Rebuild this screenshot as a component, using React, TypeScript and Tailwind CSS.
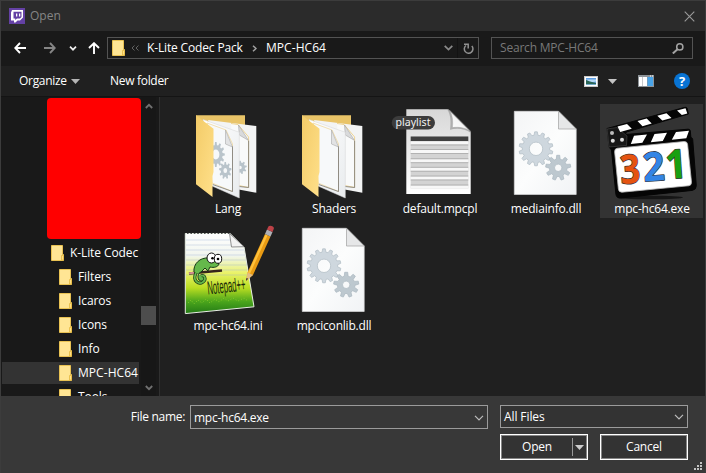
import React from "react";

const gearPath = (cx: number, cy: number, outer: number, root: number, hole: number, teeth: number) => {
  const pts: string[] = [];
  const step = (Math.PI * 2) / teeth;
  const at = (r: number, a: number) => `${(cx + r * Math.cos(a)).toFixed(2)} ${(cy + r * Math.sin(a)).toFixed(2)}`;
  for (let i = 0; i < teeth; i++) {
    const a = i * step - Math.PI / 2;
    pts.push(at(root, a - step * 0.32), at(outer, a - step * 0.17), at(outer, a + step * 0.17), at(root, a + step * 0.32));
  }
  return `M${pts.join("L")}Z M${cx + hole} ${cy}a${hole} ${hole} 0 1 0 ${-2 * hole} 0a${hole} ${hole} 0 1 0 ${2 * hole} 0Z`;
};

const SmallFolder = () => (
  <svg className="h-4 w-[13px] shrink-0" viewBox="0 0 13 16">
    <path d="M.5.5h11v9h1v6H.5z" fill="#ffe594" stroke="#e9c253" />
    <path d="M10.5 15V10.5h2V15z" fill="#ffe089" stroke="#e4b93f" strokeWidth=".8" />
  </svg>
);

const Chevron = ({ className = "" }: { className?: string }) => (
  <svg className={`h-[6px] w-[10px] shrink-0 ${className}`} viewBox="0 0 10 6">
    <path d="M1 .8l4 4 4-4" fill="none" stroke="currentColor" strokeWidth="1.2" />
  </svg>
);

const FolderIcon = ({ gears }: { gears?: boolean }) => (
  <svg className="h-24 w-[103px]" viewBox="0 0 103 96">
    <defs>
      <linearGradient id="flap" x1="0" y1="0" x2="1" y2="1">
        <stop offset="0" stopColor="#f3cb68" />
        <stop offset="1" stopColor="#ffe08a" />
      </linearGradient>
      <linearGradient id="leaf" x1="0" y1="0" x2="1" y2="1">
        <stop offset="0" stopColor="#ffffff" />
        <stop offset="1" stopColor="#e9ecee" />
      </linearGradient>
    </defs>
    <path d="M20 11.3H69V80H20z" fill="#e9c468" />
    <path d="M32 16L80.3 22V88.8L60 85z" fill="#f3f4f4" />
    <path d="M55 19.5l7 1L72.6 33V83.5L60 81" fill="#f9fafa" stroke="#eed493" strokeWidth="1" />
    <path d="M72.6 37V83.5L62 82.4" fill="none" stroke="#777" strokeWidth=".8" />
    <path d="M62.5 21l.8 10 9.3 5.5z" fill="#d9dadb" stroke="#999" strokeWidth=".5" />
    {gears && <path d={gearPath(64, 63.5, 6.8, 5, 1.8, 9)} fill="#b9c4cb" fillRule="evenodd" />}
    <path d="M27 15.5L63.3 28.3V94L36 82z" fill="url(#leaf)" stroke="#d5d5d5" strokeWidth=".5" />
    <path d="M31 19l19 7 6.5 14V87.5L36 79z" fill="#f7f9fa" stroke="#eed493" strokeWidth=".7" />
    <path d="M56.5 42V87.5L36.7 80.5" fill="none" stroke="#777" strokeWidth=".8" />
    <path d="M49.5 26v14l7 3z" fill="#e2e3e4" stroke="#aaa" strokeWidth=".6" />
    {gears && (
      <g fill="#b9c4cb" fillRule="evenodd">
        <path transform="translate(11 0) scale(.72 1)" d={gearPath(40, 50.5, 12.5, 9.5, 5, 12)} />
        <path transform="translate(14 0) scale(.72 1)" d={gearPath(49, 66.5, 8.6, 6.2, 2.6, 9)} />
      </g>
    )}
    <path d="M20 11.3l17.5 13.4V68l-1 4V93L20 80.2z" fill="url(#flap)" />
  </svg>
);

const DllIcon = () => (
  <svg className="h-24 w-[103px]" viewBox="0 0 103 96">
    <defs>
      <linearGradient id="sheet" x1="0" y1="0" x2="1" y2="1">
        <stop offset="0" stopColor="#f4f5f6" />
        <stop offset=".5" stopColor="#fcfdfd" />
        <stop offset="1" stopColor="#f1f3f5" />
      </linearGradient>
    </defs>
    <path d="M20.3 7.3H64.5L82.2 25V90.5H20.3z" fill="url(#sheet)" stroke="#d8d9da" strokeWidth=".7" />
    <path d="M64.5 7.3V25H82.2z" fill="#e6e7e8" stroke="#aaa" strokeWidth=".8" />
    <path d={gearPath(42, 44.8, 17, 13.7, 6.7, 14)} fill="#ced7de" stroke="#b5c0c8" strokeWidth=".8" fillRule="evenodd" />
    <path d={gearPath(64.2, 63.8, 12.6, 8.8, 3.7, 9)} fill="#bdc8cf" stroke="#a9b6be" strokeWidth=".7" fillRule="evenodd" />
  </svg>
);

const PlaylistIcon = () => (
  <svg className="h-24 w-[103px]" viewBox="0 0 103 96">
    <defs>
      <linearGradient id="paper" x1="0" y1="0" x2="0" y2="1">
        <stop offset="0" stopColor="#d7d7d7" />
        <stop offset="1" stopColor="#ffffff" />
      </linearGradient>
      <linearGradient id="curl" x1="0" y1="1" x2="1" y2="0">
        <stop offset="0" stopColor="#ffffff" />
        <stop offset=".5" stopColor="#f4f4f4" />
        <stop offset="1" stopColor="#aaa" />
      </linearGradient>
    </defs>
    <path d="M18.3 5.3H60L82.7 28V90H18.3z" fill="url(#paper)" />
    <path d="M59 5.3c4 5 4 14 3 20.5 7-2 15-1 20.7 3v-2L62 6z" fill="#8d8d8d" opacity=".6" />
    <path d="M60 5.3c5 4 5 13 4.4 18.3C71 22.6 79 24 82.7 28z" fill="url(#curl)" stroke="#999" strokeWidth=".4" />
    <path d="M22.7 32.5H80.3V84.5H22.7z" fill="#d3d3d3" />
    <path d="M22.7 32.5H80.3v4.8H22.7z" fill="#404040" />
    <path d="M22.7 37.3h57.6v3H22.7zM22.7 46h57.6v3H22.7zM22.7 55.2h57.6v3H22.7zM22.7 63.8h57.6v3H22.7zM22.7 72.5h57.6v3H22.7zM22.7 81.5h57.6v3H22.7z" fill="#f7f7f7" />
    <path d="M22.7 41h57.6M22.7 45.5h57.6M22.7 49.5h57.6M22.7 54.7h57.6M22.7 58.7h57.6M22.7 63.3h57.6M22.7 67.3h57.6M22.7 72h57.6M22.7 76h57.6M22.7 81h57.6" stroke="#aaa" strokeWidth=".8" />
    <rect x="3.7" y="12" width="43.3" height="13.4" rx="6.7" fill="#3c3c3c" />
    <text x="7.5" y="22" textLength="35" lengthAdjust="spacingAndGlyphs" fill="#f2f2f2" className="font-['Noto_Sans',sans-serif] text-[10.5px]">playlist</text>
  </svg>
);

const ClapperIcon = () => (
  <svg className="h-24 w-[103px]" viewBox="0 0 103 96">
    <ellipse cx="50" cy="93.5" rx="33" ry="1.8" fill="#151515" />
    <path d="M7 24.5L85 3.3q1.8-.4 2.2 1.2l1.2 5.5-62 18-1 2.5L88 25.2q2-.2 2.3 1.5l.6 6.8q1.5.2 1.8 2l3.6 46q0 4.3-4 4.9L20.5 94q-4 .2-4.6-3.8L11.5 46 9 43z" fill="#050505" stroke="#050505" strokeLinejoin="round" />
    <path d="M7 25l10-1.5 10 8.5-.5 9.5L9 43z" fill="#171717" stroke="#555" strokeWidth=".5" />
    <path d="M17.5 22.5l9.5-2.6 4.8 4.8-11.6 3.2zM37.5 17.1l9.2-2.5 5 5-9.2 2.6zM57.3 11.7l9.2-2.5 5 4.8-9.2 2.6zM77 6.4l8.5-2.2 1.8 5.2-5.5 1.7z" fill="#fff" />
    <path d="M34 31.8l13-1.2-4.6 8.2-11.6 1.2zM54.5 30l12.5-1.2-4.2 8.2-12 1.2zM76 28.1l13-1.3-2.7 7.5-14.5 1.5z" fill="#fff" />
    <circle cx="12" cy="29" r="2" fill="#bbb" />
    <circle cx="12.8" cy="36.8" r="2" fill="#ddd" />
    <circle cx="22" cy="35.8" r="2" fill="#ddd" />
    <path d="M17.5 44.2L84 37.5q3.3-.2 3.6 3L91.5 78q.2 3.4-3 3.8L22 88.2q-3.2.1-3.6-3L14.6 47.8q-.1-3.2 2.9-3.6z" fill="#fff" stroke="#bbb" strokeWidth=".8" />
    <g className="font-['Noto_Sans',sans-serif] text-[40px] font-bold" stroke="#333" strokeWidth="1.4" paintOrder="stroke" strokeLinejoin="round">
      <text transform="translate(21 80) rotate(-4)" textLength="20" lengthAdjust="spacingAndGlyphs" fill="#e55310">3</text>
      <text transform="translate(44 77.5) rotate(-4)" textLength="21.5" lengthAdjust="spacingAndGlyphs" fill="#3385e5">2</text>
      <text transform="translate(66.5 75) rotate(-4)" textLength="21" lengthAdjust="spacingAndGlyphs" fill="#19a010">1</text>
    </g>
  </svg>
);

const NotepadIcon = () => (
  <svg className="h-24 w-[103px]" viewBox="4 0 103 96">
    <defs>
      <linearGradient id="pad" x1="0" y1="0" x2="0" y2="1">
        <stop offset="0" stopColor="#ffffff" />
        <stop offset=".28" stopColor="#f1f5ee" />
        <stop offset=".5" stopColor="#e9f264" />
        <stop offset=".68" stopColor="#b9dd22" />
        <stop offset=".85" stopColor="#4aa51c" />
        <stop offset="1" stopColor="#237a16" />
      </linearGradient>
    </defs>
    <path d="M13.3 12.5H58L72 26l10 59.8L13.3 92.6z" fill="url(#pad)" stroke="#e8eee4" strokeWidth="1" />
    <path d="M15 11.8h43" stroke="#222" strokeWidth="2" strokeDasharray="1.6 1.8" />
    <path d="M14 19h45M14 24h49M14 29h58M14 34h59M14 39h60M14 44h61M14 49h61M14 54h62" stroke="#9cafd6" strokeWidth=".6" opacity=".6" />
    <path d="M16 82l3-3 3 4 4-4 4 3 4-4 4 4 5-4 4 3 5-4 4 3 5-3 5 3 6-3 4 3" fill="none" stroke="#87c92d" strokeWidth="1" strokeDasharray="1 2" />
    <path d="M57.5 12.5l2 13.5L72 25.7z" fill="#f2f2f2" stroke="#777" strokeWidth=".8" />
    <path d="M17 52.5l33-3" stroke="#35251c" strokeWidth="2.5" />
    <path d="M17 52.3l5-.5" stroke="#d19090" strokeWidth="2" />
    <path d="M22 51c-1-8 6-15 15-14 3 0 8 3 10 6-1 3-5 4-9 3l-2 4-3-3-4 4c-3 1-4 5-2 8 4 3 7 0 5-3" fill="#65b84b" stroke="#173917" strokeWidth="1" />
    <path d="M24 52c-4 8 3 12 7 9s1-8-2-6" fill="none" stroke="#173917" strokeWidth="3.2" />
    <path d="M24 52c-4 8 3 12 7 9s1-8-2-6" fill="none" stroke="#65b84b" strokeWidth="1.8" />
    <ellipse cx="39.5" cy="37" rx="4.5" ry="5" fill="#fff" stroke="#111" />
    <ellipse cx="46" cy="37.8" rx="3.7" ry="4.5" fill="#fff" stroke="#111" />
    <circle cx="40.5" cy="37.3" r="1.3" />
    <circle cx="46" cy="38" r="1.3" />
    <text transform="translate(36 73.5) rotate(-6) scale(.53 1)" textLength="72" lengthAdjust="spacingAndGlyphs" fill="#17280b" className="font-['Liberation_Sans',sans-serif] text-[19px]">Notepad++</text>
    <path d="M74 60l1.5-8.5L93 13l5.5 2.4L81 54z" fill="#e99b13" />
    <path d="M77 52.3L94.5 14" stroke="#ffc13b" strokeWidth="2.2" />
    <path d="M74 60l1.5-8.5L81 54z" fill="#e2bd84" />
    <path d="M74 60l.5-3 1.6.8z" fill="#222" />
    <path d="M93 13l2-4.5 5.5 2.4-2 4.5z" fill="#aeb0b5" />
    <path d="M95 8.5l1.4-3c1-1.8 6-.4 5.5 2L100.5 11z" fill="#bd4247" />
  </svg>
);

const files: { name: string; icon: React.ReactNode; selected?: boolean }[] = [
  { name: "Lang", icon: <FolderIcon gears /> },
  { name: "Shaders", icon: <FolderIcon /> },
  { name: "default.mpcpl", icon: <PlaylistIcon /> },
  { name: "mediainfo.dll", icon: <DllIcon /> },
  { name: "mpc-hc64.exe", icon: <ClapperIcon />, selected: true },
  { name: "mpc-hc64.ini", icon: <NotepadIcon /> },
  { name: "mpciconlib.dll", icon: <DllIcon /> },
];

const TitleBar = () => (
  <div className="flex h-[30px] shrink-0 items-center bg-[#2b2b2b] pl-2 pr-[10px]">
    <svg className="h-4 w-4" viewBox="0 0 16 16">
      <path d="M0 0h16v16H0z" fill="#6441a4" />
      <path d="M3 2h11v7.5L11 12.5H8.5L6.5 14.5H5v-2H2V4.5z" fill="#fff" />
      <path d="M4.5 3.7h8v5.2L11 10.4H8l-1.8 1.5v-1.5H4.5z" fill="#6441a4" />
      <path d="M7 5.5h1.3v3H7zM10 5.5h1.3v3H10z" fill="#fff" />
    </svg>
    <span className="ml-[5px] grow text-[12px] text-[#858585]">Open</span>
    <svg className="h-[11px] w-[11px]" viewBox="0 0 11 11">
      <path d="M.7.7l9.6 9.6M10.3.7L.7 10.3" stroke="#9a9a9a" strokeWidth="1.1" />
    </svg>
  </div>
);

const NavBar = () => (
  <div className="flex h-[35px] shrink-0 items-center bg-[#191919] pl-[13px] pb-[1px]">
    <svg className="h-3 w-3" viewBox="0 0 12 12"><path d="M12 6H1.5M6 1L1.2 6 6 11" fill="none" stroke="#fff" strokeWidth="1.9" /></svg>
    <svg className="ml-[18px] h-3 w-3" viewBox="0 0 12 12"><path d="M0 6h10.5M6 1l4.8 5L6 11" fill="none" stroke="#858585" strokeWidth="1.9" /></svg>
    <svg className="ml-[13px] h-[5px] w-[8px]" viewBox="0 0 8 5"><path d="M1 .7l3 3 3-3" fill="none" stroke="#eee" strokeWidth="1.7" /></svg>
    <svg className="ml-[11px] h-3 w-3" viewBox="0 0 12 12"><path d="M6 12V1.5M1 6l5-4.8L11 6" fill="none" stroke="#fff" strokeWidth="1.9" /></svg>
    <div className="ml-[7px] flex h-[22px] w-[372px] items-center border border-[#535353] pl-1">
      <SmallFolder />
      <svg className="ml-[6px] h-[6px] w-2" viewBox="0 0 8 6"><path d="M3.5.5L1 3l2.5 2.5M7.5.5L5 3l2.5 2.5" fill="none" stroke="#626262" /></svg>
      <span className="ml-[8px] w-[96px] whitespace-nowrap tracking-[-0.15px]">K-Lite Codec Pack</span>
      <svg className="ml-[9px] h-[7px] w-[5px]" viewBox="0 0 5 7"><path d="M1 .7l3 2.8-3 2.8" fill="none" stroke="#a0a0a0" strokeWidth="1.5" /></svg>
      <span className="ml-[9px] grow tracking-[0.05px]">MPC-HC64</span>
      <svg className="h-[6px] w-[9px]" viewBox="0 0 9 6"><path d="M.7.8l3.8 3.8L8.3.8" fill="none" stroke="#8a8a8a" strokeWidth="1.7" /></svg>
      <div className="ml-[4px] flex h-full w-[21px] items-center justify-center border-l border-[#131313]">
        <svg className="h-[12px] w-[11px]" viewBox="0 0 11 12"><path d="M3 3a4.3 4.3 0 1 0 5.8.5M1 1.8h4.2V6" fill="none" stroke="#919191" strokeWidth="1.5" transform="translate(0 .5)" /></svg>
      </div>
    </div>
    <div className="ml-3 flex h-[22px] w-[202px] items-center border border-[#535353] pl-2 pr-2">
      <span className="grow tracking-[-0.2px] text-[#787878]">Search MPC-HC64</span>
      <svg className="h-[11px] w-3" viewBox="0 0 12 11"><circle cx="7.8" cy="3.9" r="3.1" fill="none" stroke="#a3a3a3" strokeWidth="1.5" /><path d="M5.5 6.2L.8 10.5" stroke="#a3a3a3" strokeWidth="2" /></svg>
    </div>
  </div>
);

const Toolbar = () => (
  <div className="flex h-[31px] shrink-0 items-center border-b border-[#141414] bg-[#202020] pl-[18px]">
    <span className="w-[48px] tracking-[-0.3px]">Organize</span>
    <svg className="ml-[4px] h-[5px] w-[9px]" viewBox="0 0 9 5"><path d="M0 0h9L4.5 5z" fill="#b5b5b5" /></svg>
    <span className="ml-[30px] grow tracking-[-0.3px]">New folder</span>
    <svg className="h-[11px] w-[14px]" viewBox="0 0 14 11">
      <path d="M0 0h14v11H0z" fill="#c9c9c9" />
      <path d="M1 1h12v9H1z" fill="#fff" />
      <path d="M2 2h10v7H2z" fill="#5f9fe4" />
      <path d="M2 3.5h10v2L6 6.5z" fill="#b8daf8" />
      <path d="M2 4l4 1.5L12 7v2H2z" fill="#2b6656" />
      <path d="M2 8h10v1H2z" fill="#73a9c9" />
    </svg>
    <svg className="ml-[10px] h-[5px] w-[9px]" viewBox="0 0 9 5"><path d="M0 0h9L4.5 5z" fill="#c4c4c4" /></svg>
    <svg className="ml-[21px] h-3 w-4" viewBox="0 0 16 12">
      <path d="M0 0h16v12H0z" fill="#8e9499" />
      <path d="M1 2h3.5v9H1zM5 2h4v9H5z" fill="#fff" />
      <path d="M9.5 2H15v9H9.5z" fill="#49a4e8" />
      <path d="M12 .6h1v.8h-1zM14 .6h1v.8h-1z" fill="#fff" />
    </svg>
    <div className="ml-[20px] mr-[15px] flex h-[16px] w-[16px] items-center justify-center rounded-full bg-[#0873d3] text-[13px] font-bold leading-none">?</div>
  </div>
);

const TreeRow = ({ name, root, selected }: { name: string; root?: boolean; selected?: boolean }) => (
  <div className="flex h-6 shrink-0 items-center">
    <div className={`ml-px flex h-[22px] w-[137px] items-center whitespace-nowrap ${root ? "pl-[49px]" : "pl-[57px]"} ${selected ? "bg-[#333]" : ""}`}>
      <SmallFolder />
      <span className={`ml-[6px] ${selected ? "tracking-[0.05px]" : "tracking-[-0.1px]"}`}>{name}</span>
    </div>
  </div>
);

const Sidebar = () => (
  <div className="flex w-[157px] shrink-0 bg-[#191919]">
    <div className="flex w-[140px] shrink-0 flex-col overflow-hidden">
      <div className="ml-[46px] mt-px h-[141px] w-[94px] shrink-0 rounded bg-[#ff0000]" />
      <div className="mt-[2px] flex flex-col">
        <TreeRow name="K-Lite Codec" root />
        <TreeRow name="Filters" />
        <TreeRow name="Icaros" />
        <TreeRow name="Icons" />
        <TreeRow name="Info" />
        <TreeRow name="MPC-HC64" selected />
        <TreeRow name="Tools" />
      </div>
    </div>
    <div className="flex w-[15px] flex-col items-center bg-[#171717] pt-[6px] pb-[5px] text-[#707070]">
      <svg className="h-[6px] w-2" viewBox="0 0 8 6"><path d="M.8 5L4 1.8 7.2 5" fill="none" stroke="currentColor" strokeWidth="1.8" /></svg>
      <div className="mt-[197px] h-[19px] w-[15px] bg-[#4d4d4d]" />
      <svg className="mt-auto h-[6px] w-2" viewBox="0 0 8 6"><path d="M.8 1L4 4.2 7.2 1" fill="none" stroke="currentColor" strokeWidth="1.8" /></svg>
    </div>
  </div>
);

const Footer = () => (
  <div className="flex h-[77px] shrink-0 bg-[#383838] pt-[9px]">
    <span className="mt-1 w-[184px] text-right tracking-[-0.3px]">File name:</span>
    <div className="ml-[5px] flex h-6 w-[298px] items-center border border-[#9b9b9b] bg-[#383838] pl-[3px] pr-[3px] pt-px">
      <span className="grow tracking-[-0.25px]">mpc-hc64.exe</span>
      <Chevron className="text-[#bdbdbd]" />
    </div>
    <div className="ml-3 flex w-[188px] flex-col gap-[6px]">
      <div className="flex h-[23px] items-center border border-[#9b9b9b] bg-[#333] pl-[3px] pr-[3px]">
        <span className="grow tracking-[-0.1px]">All Files</span>
        <Chevron className="text-[#bdbdbd]" />
      </div>
      <div className="flex gap-3">
        <div className="flex h-[26px] w-[88px] border border-white bg-[#333]">
          <div className="flex grow items-center border border-[#858585]">
            <span className="grow text-center tracking-[-0.2px]">Open</span>
            <div className="flex h-[18px] items-center border-l border-[#989898] pl-[2px] pr-[2px]">
              <svg className="h-[5px] w-[9px]" viewBox="0 0 9 5"><path d="M0 0h9L4.5 5z" fill="#ccc" /></svg>
            </div>
          </div>
        </div>
        <div className="flex h-[26px] w-[88px] border border-white bg-[#333]">
          <div className="flex grow items-center justify-center border border-[#858585] tracking-[-0.2px]">Cancel</div>
        </div>
      </div>
    </div>
    <svg className="mb-[3px] ml-[6px] h-2 w-2 self-end" viewBox="0 0 8 8"><path d="M6 0h2v2H6zM3 3h2v2H3zM6 3h2v2H6zM0 6h2v2H0zM3 6h2v2H3zM6 6h2v2H6z" fill="#c3c3c3" /></svg>
  </div>
);

export default function App() {
  return (
    <div className="flex h-[473px] w-[706px] flex-col overflow-hidden border-l border-r border-t border-[#3c3c3c] bg-[#202020] font-['Open_Sans','Noto_Sans',sans-serif] text-[12px] leading-4 text-white">
      <TitleBar />
      <NavBar />
      <Toolbar />
      <div className="flex min-h-0 grow">
        <Sidebar />
        <div className="w-[2px] shrink-0 border-r border-[#303030] bg-[#191919]" />
        <div className="grid grow grid-cols-[repeat(5,103px)] content-start gap-[3px] pl-4 pt-[7px]">
          {files.map((f) => (
            <div key={f.name} className={`flex h-[114px] flex-col items-center ${f.selected ? "bg-[#333]" : ""}`}>
              {f.icon}
              <span className="mt-px pl-px tracking-[-0.2px]">{f.name}</span>
            </div>
          ))}
        </div>
      </div>
      <Footer />
    </div>
  );
}
